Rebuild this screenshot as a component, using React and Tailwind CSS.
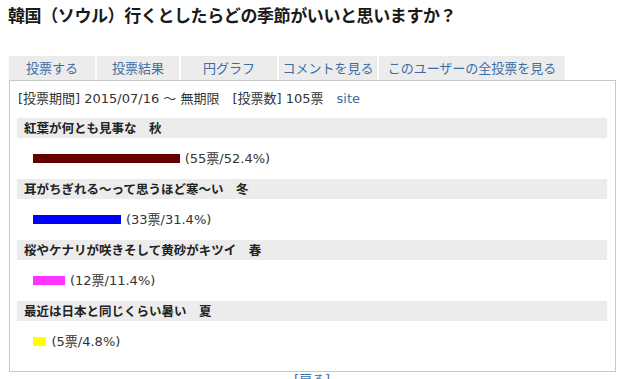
import React from "react";

const font = { fontFamily: '"DejaVu Sans", "Noto Sans CJK JP", sans-serif' };

const tabs = [
  { label: "投票する", w: "w-[86px]" },
  { label: "投票結果", w: "w-[82px]" },
  { label: "円グラフ", w: "w-[96px]" },
  { label: "コメントを見る", w: "w-[98px]" },
  { label: "このユーザーの全投票を見る", w: "w-[186px]" },
];

const items = [
  { title: "紅葉が何とも見事な　秋", votes: 55, pct: 52.4, color: "bg-[#660000]" },
  { title: "耳がちぎれる～って思うほど寒～い　冬", votes: 33, pct: 31.4, color: "bg-[#0000ff]" },
  { title: "桜やケナリが咲きそして黄砂がキツイ　春", votes: 12, pct: 11.4, color: "bg-[#ff33ff]" },
  { title: "最近は日本と同じくらい暑い　夏", votes: 5, pct: 4.8, color: "bg-[#ffff00]" },
];

export default function App() {
  return (
    <div className="w-[624px] h-[379px] overflow-hidden bg-white pl-2 text-[#333]" style={font}>
      {/* Title */}
      <h1
        className="pt-[1px] h-[56px] text-[17px] leading-[28px] font-bold tracking-[-0.4px] text-[#1a1a1a]"
        style={{ fontFamily: '"Noto Sans CJK JP", sans-serif' }}
      >
        韓国（ソウル）行くとしたらどの季節がいいと思いますか？
      </h1>

      {/* Tabs */}
      <div className="flex gap-[2px] h-[24px] pl-[1px]">
        {tabs.map((t) => (
          <div
            key={t.label}
            className={`${t.w} bg-[#ececec] flex items-center justify-center text-[13px] text-[#3a6ea5]`}
            style={{ fontFamily: '"Noto Sans CJK JP", sans-serif' }}
          >
            {t.label}
          </div>
        ))}
      </div>

      {/* Result box */}
      <div className="ml-[1px] w-[607px] border border-[#c8c8c8] pl-[7px] pr-2 pt-[9px] pb-[9px]">
        <div className="h-[18px] leading-[18px] text-[13px] mb-[10px] pl-[1px]">
          {"[投票期間] 2015/07/16 ～ 無期限　[投票数] 105票　"}
          <span className="text-[#3a6ea5]">site</span>
        </div>

        {items.map((it) => (
          <div key={it.title}>
            <div
              className="h-[20px] bg-[#ececec] pl-[7px] text-[12.5px] leading-[20px] font-bold text-[#222]"
              style={{ fontFamily: '"Noto Sans CJK JP", sans-serif' }}
            >
              {it.title}
            </div>
            <div className="h-[41px] flex items-center pl-[16px]">
              <div className={`${it.color} h-[9px]`} style={{ width: `${it.pct * 2.8}px` }} />
              <span className="ml-[5px] text-[13px]">
                ({it.votes}票/{it.pct}%)
              </span>
            </div>
          </div>
        ))}
      </div>

      <div className="text-center text-[13px] leading-[16px] text-[#3a6ea5] pr-2">[戻る]</div>
    </div>
  );
}
